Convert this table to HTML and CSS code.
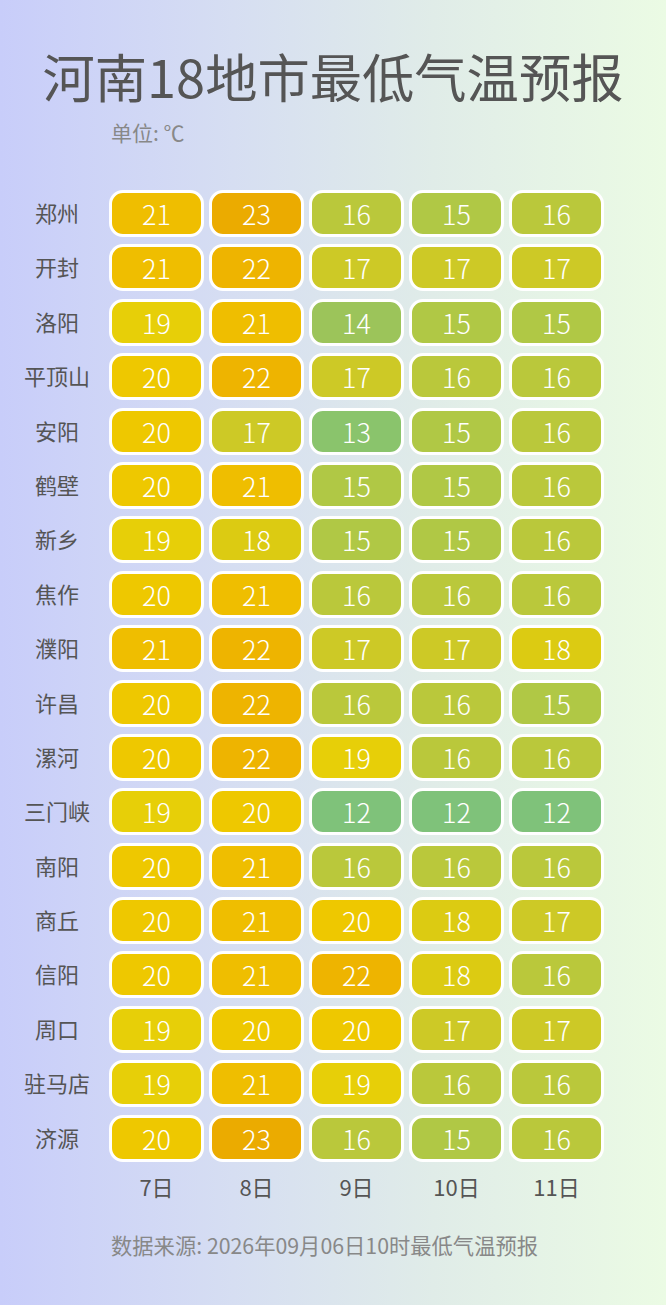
FILE: index.html
```html
<!DOCTYPE html>
<html lang="zh">
<head>
<meta charset="utf-8">
<link rel="stylesheet" href="styles.css">
</head>
<body>
<div class="page">
  <h1 class="title">河南18地市最低气温预报</h1>
  <div class="unit">单位: ℃</div>
  <div class="grid">
    <div class="city">郑州</div><div class="c t21">21</div><div class="c t23">23</div><div class="c t16">16</div><div class="c t15">15</div><div class="c t16">16</div>
    <div class="city">开封</div><div class="c t21">21</div><div class="c t22">22</div><div class="c t17">17</div><div class="c t17">17</div><div class="c t17">17</div>
    <div class="city">洛阳</div><div class="c t19">19</div><div class="c t21">21</div><div class="c t14">14</div><div class="c t15">15</div><div class="c t15">15</div>
    <div class="city">平顶山</div><div class="c t20">20</div><div class="c t22">22</div><div class="c t17">17</div><div class="c t16">16</div><div class="c t16">16</div>
    <div class="city">安阳</div><div class="c t20">20</div><div class="c t17">17</div><div class="c t13">13</div><div class="c t15">15</div><div class="c t16">16</div>
    <div class="city">鹤壁</div><div class="c t20">20</div><div class="c t21">21</div><div class="c t15">15</div><div class="c t15">15</div><div class="c t16">16</div>
    <div class="city">新乡</div><div class="c t19">19</div><div class="c t18">18</div><div class="c t15">15</div><div class="c t15">15</div><div class="c t16">16</div>
    <div class="city">焦作</div><div class="c t20">20</div><div class="c t21">21</div><div class="c t16">16</div><div class="c t16">16</div><div class="c t16">16</div>
    <div class="city">濮阳</div><div class="c t21">21</div><div class="c t22">22</div><div class="c t17">17</div><div class="c t17">17</div><div class="c t18">18</div>
    <div class="city">许昌</div><div class="c t20">20</div><div class="c t22">22</div><div class="c t16">16</div><div class="c t16">16</div><div class="c t15">15</div>
    <div class="city">漯河</div><div class="c t20">20</div><div class="c t22">22</div><div class="c t19">19</div><div class="c t16">16</div><div class="c t16">16</div>
    <div class="city">三门峡</div><div class="c t19">19</div><div class="c t20">20</div><div class="c t12">12</div><div class="c t12">12</div><div class="c t12">12</div>
    <div class="city">南阳</div><div class="c t20">20</div><div class="c t21">21</div><div class="c t16">16</div><div class="c t16">16</div><div class="c t16">16</div>
    <div class="city">商丘</div><div class="c t20">20</div><div class="c t21">21</div><div class="c t20">20</div><div class="c t18">18</div><div class="c t17">17</div>
    <div class="city">信阳</div><div class="c t20">20</div><div class="c t21">21</div><div class="c t22">22</div><div class="c t18">18</div><div class="c t16">16</div>
    <div class="city">周口</div><div class="c t19">19</div><div class="c t20">20</div><div class="c t20">20</div><div class="c t17">17</div><div class="c t17">17</div>
    <div class="city">驻马店</div><div class="c t19">19</div><div class="c t21">21</div><div class="c t19">19</div><div class="c t16">16</div><div class="c t16">16</div>
    <div class="city">济源</div><div class="c t20">20</div><div class="c t23">23</div><div class="c t16">16</div><div class="c t15">15</div><div class="c t16">16</div>
  </div>
  <div class="days">
    <div class="day">7日</div><div class="day">8日</div><div class="day">9日</div><div class="day">10日</div><div class="day">11日</div>
  </div>
  <div class="source">数据来源: 2026年09月06日10时最低气温预报</div>
</div>
</body>
</html>
```
FILE: styles.css
```css
html, body {
  margin: 0;
  padding: 0;
}
body {
  width: 666px;
  height: 1305px;
  background: linear-gradient(90deg, #c8cdfa 0%, #d6def2 35%, #e0ece8 65%, #ebfbe4 100%);
  font-family: "Noto Sans CJK SC", "Noto Sans", sans-serif;
  overflow: hidden;
}
.page {
  padding-top: 40px;
}
.title {
  margin: 0;
  font-size: 52.3px;
  line-height: 70px;
  font-weight: 400;
  color: #555;
  text-align: center;
}
.unit {
  margin-top: 8px;
  padding-left: 111px;
  font-size: 21px;
  line-height: 28px;
  color: #888;
}
.grid {
  margin-top: 44px;
  display: grid;
  grid-template-columns: 104px repeat(5, 95px);
  grid-auto-rows: 47px;
  column-gap: 5px;
  row-gap: 7.4px;
}
.city {
  padding-left: 10px;
  display: flex;
  align-items: center;
  justify-content: center;
  font-size: 22px;
  font-weight: 400;
  color: #555;
  margin-top: -3px;
}
.c {
  box-sizing: border-box;
  border: 3px solid #fff;
  border-radius: 14px;
  display: flex;
  align-items: center;
  justify-content: center;
  color: #fff;
  font-size: 27px;
  font-weight: 300;
}
.t12 { background: #7fc27a; }
.t13 { background: #8ac46c; }
.t14 { background: #9cc45a; }
.t15 { background: #b0c845; }
.t16 { background: #bac83b; }
.t17 { background: #cdc926; }
.t18 { background: #dccb12; }
.t19 { background: #e7cf08; }
.t20 { background: #eec800; }
.t21 { background: #efbe00; }
.t22 { background: #eeb400; }
.t23 { background: #ebab00; }
.days {
  margin-top: 9px;
  padding-left: 109px;
  display: flex;
  gap: 5px;
}
.day {
  width: 95px;
  text-align: center;
  font-size: 22px;
  font-weight: 400;
  line-height: 30px;
  color: #555;
}
.source {
  margin-top: 30px;
  padding-left: 111px;
  font-size: 21.3px;
  line-height: 28px;
  color: #888;
}
```
